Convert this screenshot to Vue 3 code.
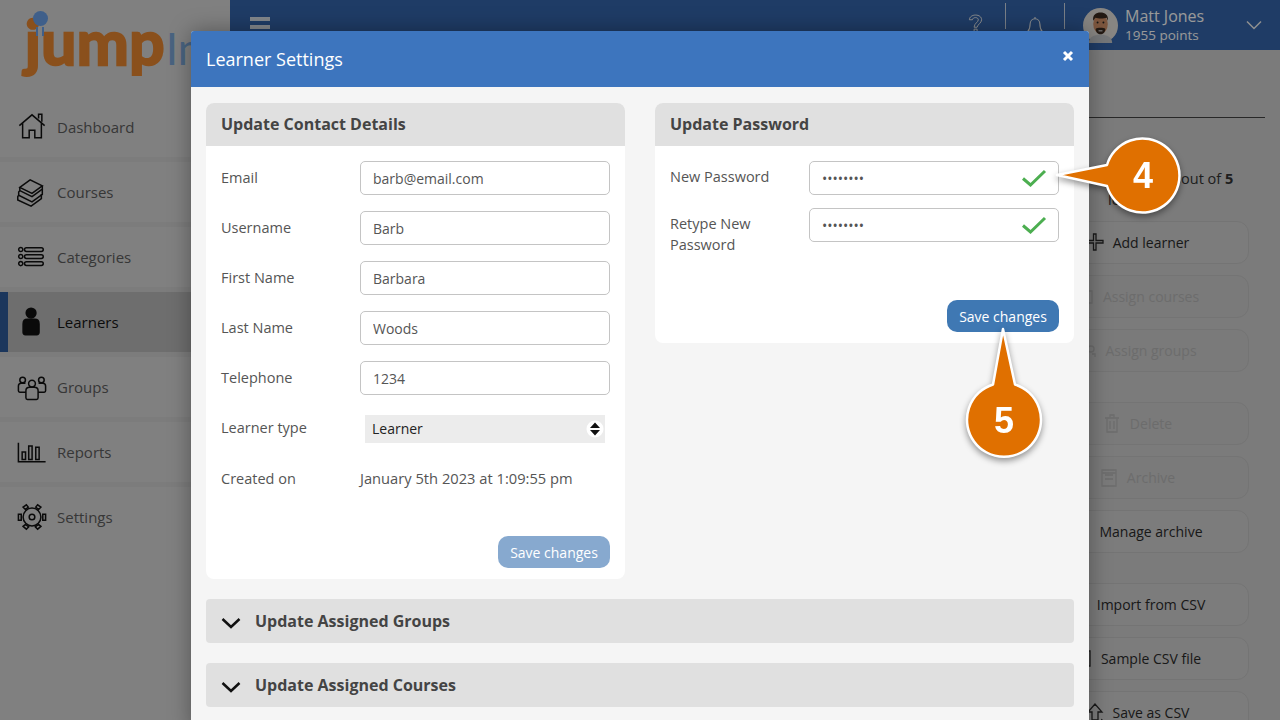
<script setup>
const circle = (x, y, r) => `M${x - r} ${y}a${r} ${r} 0 1 0 ${r * 2} 0a${r} ${r} 0 1 0 ${-r * 2} 0`;

const navItems = [
  {
    label: "Dashboard",
    paths: ["M2.500 14.500 16 3l13.500 11.500", "M6 12v15.500h7v-8h6v8h7V12", "M23 7V2.500h3.500v8"],
  },
  {
    label: "Courses",
    paths: [
      "M3 11 14 3l13 6.500-11 8z",
      "M3 11v3.500l13 6.500 11-8V9.500",
      "M3 14.500 1.800 16v3.500L16 26.500l11-8V13",
      "M1.800 19.500.8 21v3.500L15 31l11-8v-5",
    ],
  },
  {
    label: "Categories",
    paths: [
      circle(4, 8, 2.2),
      circle(4, 15.5, 2.2),
      circle(4, 23, 2.2),
      "M10 6h16a1.800 1.800 0 0 1 0 4H10a1.800 1.800 0 0 1 0-4z",
      "M10 13.500h16a1.800 1.800 0 0 1 0 4H10a1.800 1.800 0 0 1 0-4z",
      "M10 21h16a1.800 1.800 0 0 1 0 4H10a1.800 1.800 0 0 1 0-4z",
    ],
  },
  {
    label: "Learners",
    active: true,
    filled: true,
    paths: [circle(15, 6.500, 5.200), "M11 13h8c3 0 4.500 2 4.500 5v9c0 1.500-1 2.500-2.500 2.500H9c-1.500 0-2.500-1-2.500-2.500v-9c0-3 1.500-5 4.500-5z"],
  },
  {
    label: "Groups",
    paths: [
      circle(16, 12.500, 3.600),
      circle(6, 8.500, 3),
      circle(26, 8.500, 3),
      "M9.500 27.500V20c0-2.500 2-3.700 4-3.700h5c2 0 4 1.200 4 3.700v7.500c0 1-.8 1.700-1.700 1.700h-9.600c-.9 0-1.700-.7-1.700-1.700z",
      "M9.500 21.500H3c-1 0-1.500-.6-1.500-1.500v-5c0-2 1.500-3 3-3H9",
      "M22.500 21.500H29c1 0 1.500-.6 1.500-1.500v-5c0-2-1.500-3-3-3H23",
    ],
  },
  {
    label: "Reports",
    paths: [
      "M1.500 6v20.500h29",
      "M5.500 16h3.600v8H5.500z",
      "M12.500 9.500h3.600V24h-3.600z",
      "M20 11h3.600v13H20z",
    ],
  },
  {
    label: "Settings",
    paths: [
      circle(16, 16, 3),
      circle(16, 16, 9.500),
      "M1.500 13h3v6.500h-3z",
      "M27.500 13h3v6.500h-3z",
      "M6.500 5.500 10 3l2 2.500L9 8z",
      "M25.500 5.500 22 3l-2 2.500L23 8z",
      "M6.500 26l3.500 3 2.500-2.500L9 24z",
      "M25.500 26 22 29l-2.500-2.500L23 24z",
    ],
  },
];

const actionGroups = [
  [
    { label: "Add learner", icon: "M8.500 2h2.500v6.500h7v2.500h-7v7H8.500v-7h-7V8.500h7z" },
    { label: "Assign courses", off: true, icon: "M3 5h14v12H3z" },
    { label: "Assign groups", off: true, icon: "M17 9a3 3 0 1 0-6 0 3 3 0 1 0 6 0M18 17v-3h-3" },
  ],
  [
    { label: "Delete", off: true, icon: "M3 5h14M8 5V2h4v3M5 5v14h10V5M8 8v8M12 8v8" },
    { label: "Archive", off: true, icon: "M3 3h14v16H3zM6 8h8M6 12h8M3 6h14" },
    { label: "Manage archive", icon: "M3 3h14v16H3z" },
  ],
  [
    { label: "Import from CSV", icon: "M10 2v12M5 9l5 5 5-5" },
    { label: "Sample CSV file", icon: "M3 3h14v15H3z" },
    { label: "Save as CSV", icon: "M10 2 3 10h4v8h6v-8h4zM17 17l-1 3" },
  ],
];

const contactRows = [
  { label: "Email", value: "barb@email.com" },
  { label: "Username", value: "Barb" },
  { label: "First Name", value: "Barbara" },
  { label: "Last Name", value: "Woods" },
  { label: "Telephone", value: "1234" },
];

const passwordRows = [
  { label: "New Password", value: "password" },
  { label: "Retype New Password", value: "password" },
];
</script>

<template>
  <div class="app">
    <aside class="sidebar">
      <div class="logo">
        <span class="logo-ball"></span>
        <span class="logo-ticks"></span>
        <span class="logo-jump">jump</span><span class="logo-rest">Im</span>
      </div>
      <nav class="nav">
        <a v-for="item in navItems" :key="item.label" class="nav-item" :class="{ active: item.active }">
          <svg class="nav-icon" :class="{ filled: item.filled }" viewBox="0 0 32 32">
            <path v-for="(d, i) in item.paths" :key="i" :d="d" />
          </svg>
          <span>{{ item.label }}</span>
        </a>
      </nav>
    </aside>

    <main class="main">
      <header class="topbar">
        <div class="burger"><i></i><i></i><i></i></div>
        <div class="top-right">
          <svg class="top-icon help" viewBox="0 0 16 20">
            <path d="M1.500 6C1.500 3 4.500 1 8 1c3.800 0 6.500 2 6.500 5 0 3.500-4 4.500-4.800 8H6.500c.3-4.500 4.500-5.300 4.500-8 0-1.300-1.300-2.300-3-2.300-1.700 0-3 .8-3.300 2.300z" />
            <path d="M6.500 16h3.200v3H6.500z" />
          </svg>
          <span class="top-divider"></span>
          <svg class="top-icon bell" viewBox="0 0 18 20">
            <path d="M1 17c2-2 2.500-4 2.500-8C3.500 5.500 6 3 9 3s5.500 2.500 5.500 6c0 4 .5 6 2.500 8zM9 3V1" />
          </svg>
          <span class="top-divider"></span>
          <svg class="avatar" viewBox="0 0 36 36">
            <circle cx="18" cy="18" r="18" fill="#e2ded9" />
            <path d="M6 36c0-6 5-8.500 12-8.500S30 30 30 36z" fill="#c3c6ca" />
            <ellipse cx="18" cy="16.500" rx="7.500" ry="10" fill="#cf9068" />
            <path d="M10.500 13C9.500 7 13.500 4.500 18 4.500S26.500 7 25.500 13l-1.200-3c-3 1-8.500 1-11.500 0z" fill="#3a2a20" />
            <path d="M13 21.500c1.500-1.500 8.500-1.500 10 0-.2 3.500-2.500 5.500-5 5.500s-4.800-2-5-5.500z" fill="#3a2a20" />
            <circle cx="15" cy="15" r="1" fill="#222" />
            <circle cx="21" cy="15" r="1" fill="#222" />
            <path d="M16 23.500h4" stroke="#eee" stroke-width="1" />
          </svg>
          <div class="user">
            <div class="user-name">Matt Jones</div>
            <div class="user-points">1955 points</div>
          </div>
          <svg class="user-chevron" viewBox="0 0 16 10"><path d="M1 1.500 8 8.500l7-7" /></svg>
        </div>
      </header>

      <div class="page-title"></div>

      <div class="side-col">
        <p class="count">Showing 5 out of <b>5</b> learners</p>
        <div class="groups">
          <div v-for="(group, g) in actionGroups" :key="g" class="group">
            <button v-for="action in group" :key="action.label" class="action" :class="{ off: action.off }">
              <svg class="action-icon" viewBox="0 0 20 20"><path :d="action.icon" /></svg>
              <span>{{ action.label }}</span>
            </button>
          </div>
        </div>
      </div>
    </main>

    <div class="overlay"></div>

    <section class="modal">
      <header class="modal-head">
        <h1>Learner Settings</h1>
        <svg class="close" viewBox="0 0 12 12"><path d="M2 2l8 8M10 2l-8 8" /></svg>
      </header>
      <div class="modal-body">
        <div class="columns">
          <div class="card">
            <h2 class="card-head">Update Contact Details</h2>
            <div class="card-body">
              <div v-for="row in contactRows" :key="row.label" class="row">
                <label>{{ row.label }}</label>
                <input class="field" type="text" :value="row.value" readonly />
              </div>
              <div class="row">
                <label>Learner type</label>
                <div class="select-wrap">
                  <select class="select">
                    <option>Learner</option>
                  </select>
                  <svg class="select-arrows" viewBox="0 0 18 18">
                    <circle cx="9" cy="9" r="8.500" fill="#fff" />
                    <path d="M9 2.500 14 8H4zM9 15.500 4 10h10z" fill="#111" />
                  </svg>
                </div>
              </div>
              <div class="row created">
                <label>Created on</label>
                <span class="created-value">January 5th 2023 at 1:09:55 pm</span>
              </div>
              <div class="actions left">
                <button class="save disabled">Save changes</button>
              </div>
            </div>
          </div>

          <div class="card">
            <h2 class="card-head">Update Password</h2>
            <div class="card-body">
              <div v-for="row in passwordRows" :key="row.label" class="row tight">
                <label>{{ row.label }}</label>
                <div class="password">
                  <input class="field" type="password" :value="row.value" readonly />
                  <svg class="tick" viewBox="0 0 26 18"><path d="M2 9.500 9.500 16 24 2" /></svg>
                </div>
              </div>
              <div class="actions right">
                <button class="save">Save changes</button>
              </div>
            </div>
          </div>
        </div>

        <div class="section">
          <svg class="chevron" viewBox="0 0 20 12"><path d="M1.500 2 10 10l8.500-8" /></svg>
          <span>Update Assigned Groups</span>
        </div>
        <div class="section">
          <svg class="chevron" viewBox="0 0 20 12"><path d="M1.500 2 10 10l8.500-8" /></svg>
          <span>Update Assigned Courses</span>
        </div>
      </div>
    </section>

    <svg class="callout four" viewBox="0 0 140 95">
      <path d="M7 45 57 35A37 37 0 1 1 57 56Z" />
      <text x="93" y="58">4</text>
    </svg>
    <svg class="callout five" viewBox="0 0 90 145">
      <path d="M43 7 55 62.500A37 37 0 1 1 33 62.500Z" />
      <text x="44" y="111">5</text>
    </svg>
  </div>
</template>

<style>
html,
body {
  margin: 0;
  overflow: hidden;
}
</style>

<style scoped>
* {
  box-sizing: border-box;
}

.app {
  position: relative;
  display: flex;
  width: 1280px;
  height: 720px;
  overflow: hidden;
  font-family: "Open Sans", sans-serif;
  font-size: 15px;
  color: #555;
  background: #cdcdcd;
}

.sidebar {
  width: 230px;
  flex: none;
  background: #d5d5d5;
}

.logo {
  position: relative;
  height: 97px;
  padding: 8px 0 0 25px;
  white-space: nowrap;
  overflow: hidden;
}

.logo-jump {
  font-family: Lato, sans-serif;
  font-weight: 700;
  font-size: 62px;
  line-height: 66px;
  color: #e78530;
  -webkit-text-stroke: 2.500px #e78530;
  letter-spacing: 0.5px;
}

.logo-rest {
  font-family: Lato, sans-serif;
  font-weight: 400;
  font-size: 44px;
  color: #7ba6d6;
  margin-left: 1px;
}

.logo-ball {
  position: absolute;
  left: 33px;
  top: 11px;
  width: 15px;
  height: 15px;
  border-radius: 50%;
  background: #699fe6;
  z-index: 1;
}

.logo-ticks {
  position: absolute;
  left: 36px;
  top: 27px;
  width: 8px;
  height: 9px;
  border-left: 2px solid #699fe6;
  border-right: 2px solid #699fe6;
  z-index: 1;
}

.nav {
  display: flex;
  flex-direction: column;
  gap: 5px;
  background: #cfcfcf;
}

.nav-item {
  display: flex;
  align-items: center;
  gap: 10px;
  height: 60px;
  padding-left: 17px;
  background: #d5d5d5;
  color: #5c5c5c;
}

.nav-item.active {
  background: #b8b8b8;
  color: #151515;
  border-left: 8px solid #2e5a99;
  padding-left: 9px;
}

.nav-icon {
  width: 30px;
  height: 30px;
  fill: none;
  stroke: #111;
  stroke-width: 1.600;
}

.nav-icon.filled {
  fill: #111;
}

.main {
  flex: 1;
  display: flex;
  flex-direction: column;
  min-width: 0;
}

.topbar {
  display: flex;
  align-items: center;
  height: 50px;
  flex: none;
  padding-left: 20px;
  background: #3465aa;
  color: #fff;
}

.burger {
  display: flex;
  flex-direction: column;
  gap: 4px;
  width: 20px;
  margin-top: 4px;
}

.burger i {
  height: 4px;
  background: #dbe2ea;
}

.top-right {
  display: flex;
  align-items: center;
  margin-left: auto;
  height: 100%;
  padding-right: 18px;
}

.top-icon {
  fill: none;
  stroke: #f0f0f0;
  stroke-width: 1;
}

.top-icon.help {
  width: 15px;
  height: 19px;
  margin: 0 0 3px 0;
}

.top-icon.bell {
  stroke-width: 1.200;
  width: 16px;
  height: 20px;
  margin: 0 21px 0 21px;
}

.top-divider {
  width: 1px;
  height: 26px;
  margin: 0 0 19px 22px;
  background: #f0f0f0;
  opacity: 0.8;
}

.top-icon.bell + .top-divider {
  margin-left: 0;
}

.avatar {
  width: 35px;
  height: 35px;
  margin-left: 18px;
}

.user {
  margin-left: 7px;
  width: 121px;
}

.user-name {
  font-size: 16px;
  line-height: 20px;
}

.user-points {
  font-size: 13.500px;
  line-height: 18px;
}

.user-chevron {
  width: 16px;
  height: 10px;
  fill: none;
  stroke: #f0f0f0;
  stroke-width: 1.500;
}

.page-title {
  height: 68px;
  flex: none;
  margin-right: 15px;
  border-bottom: 1px solid #444;
}

.side-col {
  width: 224px;
  margin: 0 31px 0 auto;
  flex: none;
}

.count {
  margin: 0 0 10.500px;
  padding: 50px 0 0 83px;
  font-size: 14.500px;
  line-height: 21px;
  color: #333;
}

.groups,
.group {
  display: flex;
  flex-direction: column;
}

.groups {
  gap: 30px;
}

.group {
  gap: 11px;
}

.action {
  display: flex;
  align-items: center;
  justify-content: center;
  gap: 8px;
  height: 43px;
  border: 1px solid #c2c2c2;
  border-radius: 12px;
  background: #cfcfcf;
  font-family: inherit;
  font-size: 14px;
  color: #2b2b2b;
}

.action.off {
  color: #b5b5b5;
  background: #cbcbcb;
}

.action-icon {
  width: 20px;
  height: 20px;
  flex: none;
  fill: none;
  stroke: currentColor;
  stroke-width: 1.300;
}

.overlay {
  position: absolute;
  inset: 0;
  background: rgba(0, 0, 0, 0.4);
  z-index: 10;
}

.modal {
  position: absolute;
  left: 191px;
  top: 31px;
  width: 898px;
  height: 700px;
  background: #f5f5f5;
  border-radius: 3px 3px 0 0;
  box-shadow: 0 0 22px rgba(0, 0, 0, 0.35);
  z-index: 20;
}

.modal-head {
  display: flex;
  align-items: center;
  justify-content: space-between;
  height: 56px;
  padding: 0 15px;
  background: #3d75be;
  border-radius: 3px 3px 0 0;
}

.modal-head h1 {
  margin: 0;
  font-size: 18px;
  font-weight: 400;
  color: #fff;
}

.close {
  width: 12px;
  height: 12px;
  margin: 0 0 6px;
  fill: none;
  stroke: #fff;
  stroke-width: 3;
}

.modal-body {
  padding: 16px 15px;
}

.columns {
  display: flex;
  align-items: flex-start;
  gap: 30px;
}

.card {
  width: 419px;
  background: #fff;
  border-radius: 8px;
}

.card-head {
  display: flex;
  align-items: center;
  height: 43px;
  margin: 0;
  padding: 0 0 2px 15px;
  font-size: 16px;
  font-weight: 700;
  color: #444;
  background: #e0e0e0;
  border-radius: 8px 8px 0 0;
}

.card-body {
  padding: 15px 15px 11px;
}

.row {
  display: grid;
  grid-template-columns: 139px 250px;
  align-items: start;
  margin-bottom: 16px;
}

.row.tight {
  margin-bottom: 13px;
}

.row label {
  padding-top: 5.500px;
  padding-right: 30px;
  font-size: 14.500px;
  line-height: 21px;
  color: #555;
}

.row.tight label {
  padding-top: 4.500px;
}

.field {
  display: block;
  width: 250px;
  height: 34px;
  padding: 0 12px;
  border: 1px solid #c4c4c4;
  border-radius: 5px;
  background: #fff;
  font-family: inherit;
  font-size: 14px;
  color: #555;
  outline: none;
}

.select-wrap {
  position: relative;
  width: 240px;
  margin: 4px 0 0 5px;
}

.select {
  display: block;
  width: 100%;
  height: 28px;
  padding: 0 7px 2px;
  border: none;
  border-radius: 0;
  background: #ececec;
  appearance: none;
  font-family: inherit;
  font-size: 14px;
  color: #222;
}

.select-arrows {
  position: absolute;
  right: 1px;
  top: 5px;
  width: 18px;
  height: 18px;
}

.row.created {
  margin: 19.500px 0 0;
}

.created-value {
  padding-top: 5.500px;
  font-size: 14.700px;
  line-height: 21px;
  white-space: nowrap;
  color: #555;
}

.actions {
  display: flex;
  justify-content: flex-end;
}

.actions.left {
  margin-top: 47px;
}

.actions.right {
  margin-top: 45.500px;
}

.save {
  width: 112px;
  height: 32px;
  padding: 0;
  border: none;
  border-radius: 10px;
  background: #3f78b3;
  font-family: inherit;
  font-size: 14px;
  color: #fff;
}

.save.disabled {
  background: #87a9cf;
}

.password {
  position: relative;
}

.tick {
  position: absolute;
  right: 12px;
  top: 8px;
  width: 26px;
  height: 18px;
  fill: none;
  stroke: #4cae50;
  stroke-width: 3;
}

.section {
  display: flex;
  align-items: center;
  gap: 14px;
  height: 44px;
  margin-top: 20px;
  padding-left: 15px;
  border-radius: 4px;
  background: #e0e0e0;
  font-size: 16px;
  font-weight: 700;
  color: #444;
}

.chevron {
  width: 20px;
  height: 12px;
  margin-top: 3px;
  fill: none;
  stroke: #111;
  stroke-width: 2.500;
}

.callout {
  position: absolute;
  z-index: 30;
  overflow: visible;
  filter: drop-shadow(0 3px 3px rgba(0, 0, 0, 0.4));
}

.callout.four {
  left: 1050px;
  top: 130px;
  width: 140px;
  height: 95px;
}

.callout.five {
  left: 960px;
  top: 322px;
  width: 90px;
  height: 145px;
}

.callout path {
  fill: #e07000;
  stroke: #fff;
  stroke-width: 2.500;
  stroke-linejoin: round;
}

.callout text {
  font-family: "Liberation Sans", sans-serif;
  font-weight: 700;
  font-size: 36px;
  fill: #fff;
  text-anchor: middle;
}
</style>
